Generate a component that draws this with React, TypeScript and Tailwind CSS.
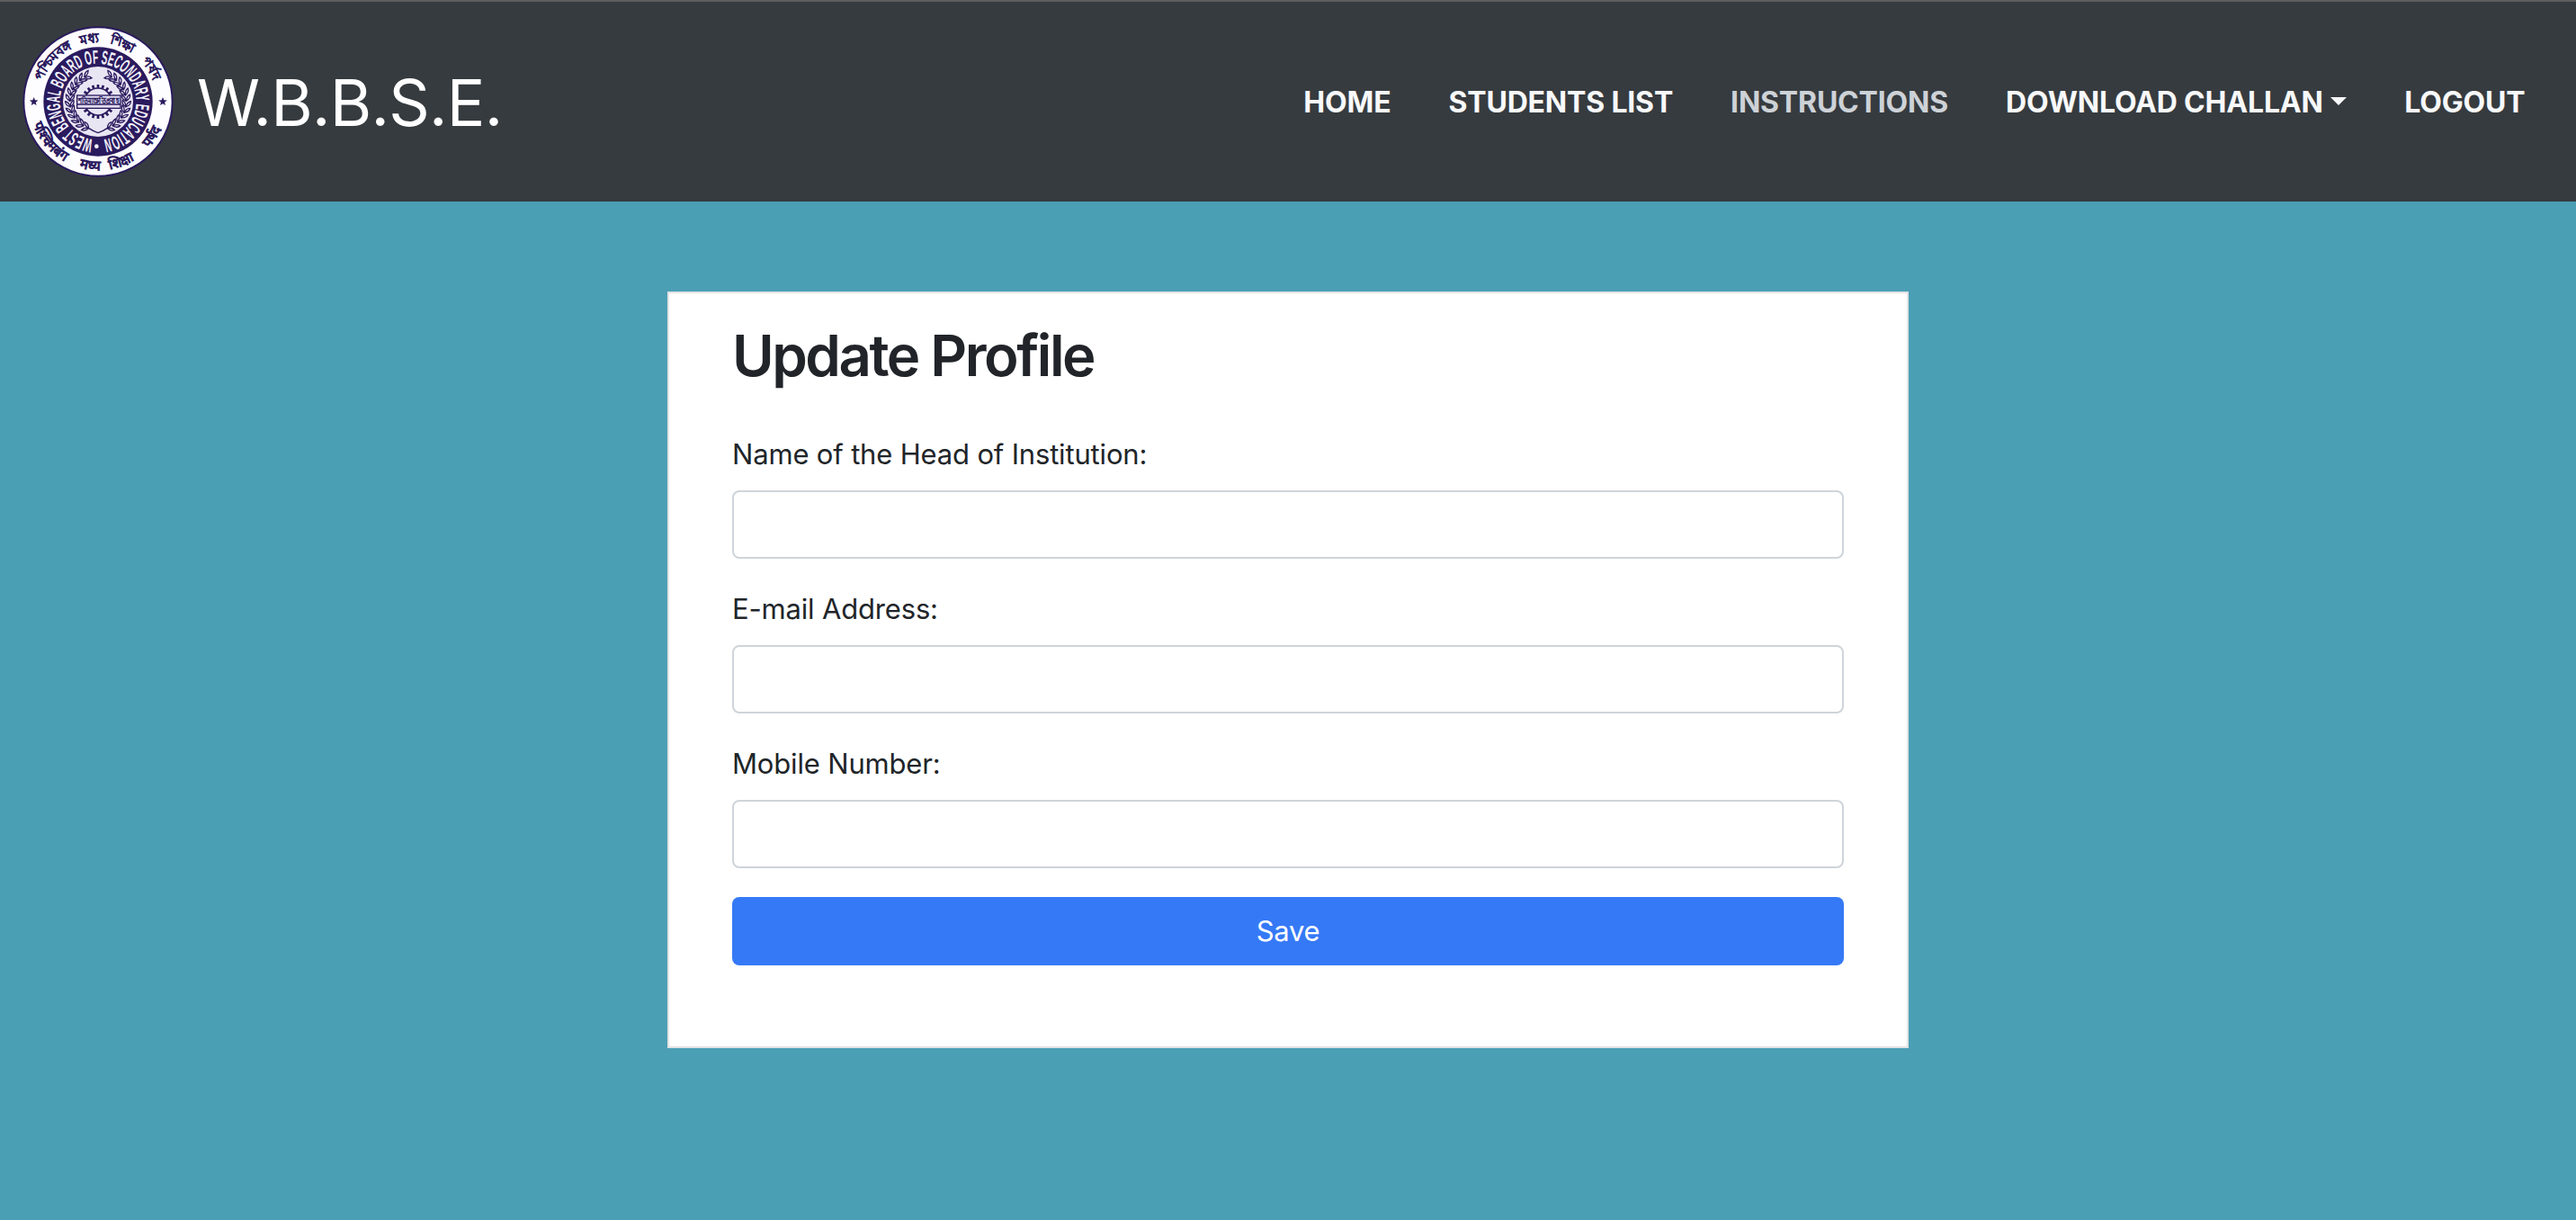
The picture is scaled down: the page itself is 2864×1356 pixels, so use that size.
import React from "react";

const NAVY = "#2a1a5e";

const topWords = [
  { text: "পশ্চিমবঙ্গ", angle: -48 },
  { text: "মধ্য", angle: -8 },
  { text: "শিক্ষা", angle: 23 },
  { text: "পর্ষদ", angle: 58 },
];

const bottomWords = [
  { text: "पश्चिमबंग", angle: 50 },
  { text: "मध्य", angle: 7 },
  { text: "शिक्षा", angle: -21 },
  { text: "पर्षद", angle: -57 },
];

const leafAngles = [22, 34, 46, 58, 70, 82, 94, 106, 118, 130, 142, 154];
const toothAngles = Array.from({ length: 20 }, (_, i) => i * 18);

function Star({ x }: { x: number }) {
  const points = Array.from({ length: 10 }, (_, i) => {
    const r = i % 2 === 0 ? 15 : 6.5;
    const a = (i * Math.PI) / 5 - Math.PI / 2;
    return `${(x + r * Math.cos(a)).toFixed(1)},${(r * Math.sin(a)).toFixed(1)}`;
  }).join(" ");
  return <polygon points={points} fill={NAVY} />;
}

function WreathHalf() {
  return (
    <g fill="#f4f2fb" stroke={NAVY} strokeWidth="4">
      <path d="M0 104 Q-14 100 -30 89" fill="none" />
      {leafAngles.map((a) => (
        <g key={a} transform={`rotate(${a}) translate(0 94)`}>
          <path d="M4 0 Q-2 -15 -16 -14 Q-12 -3 4 0Z" />
          <path d="M4 0 Q-2 15 -16 14 Q-12 3 4 0Z" />
        </g>
      ))}
    </g>
  );
}

function Seal() {
  return (
    <svg viewBox="-252 -252 504 504" className="h-[168px] w-[168px] shrink-0" role="img">
      <defs>
        <path id="arc-top" d="M0 197 A197 197 0 0 1 0 -197 A197 197 0 0 1 0 197" />
        <path id="arc-bottom" d="M0 -229 A229 229 0 0 0 0 229 A229 229 0 0 0 0 -229" />
        <path id="arc-ring" d="M0 127 A127 127 0 0 1 0 -127 A127 127 0 0 1 0 127" />
      </defs>
      <circle r="248" fill="#fdfcff" stroke={NAVY} strokeWidth="6" />
      <circle r="182" fill={NAVY} />
      <circle r="117" fill="#e9e6f4" />

      <g fill={NAVY} stroke={NAVY} strokeWidth="3" fontFamily="'Noto Sans', sans-serif" textAnchor="middle">
        {topWords.map((w) => (
          <text key={w.text} fontSize="43" transform={`rotate(${w.angle})`}>
            <textPath href="#arc-top" startOffset="50%">{w.text}</textPath>
          </text>
        ))}
        {bottomWords.map((w) => (
          <text key={w.text} fontSize="46" transform={`rotate(${w.angle})`}>
            <textPath href="#arc-bottom" startOffset="50%">{w.text}</textPath>
          </text>
        ))}
      </g>

      <text
        transform="rotate(7)"
        fontFamily="'Liberation Sans', sans-serif"
        fontWeight="700"
        fontSize="64"
        wordSpacing="-2"
        fill="#f4f2fb"
        textLength="764"
        lengthAdjust="spacingAndGlyphs"
      >
        <textPath href="#arc-ring" textLength="764" lengthAdjust="spacingAndGlyphs">
          WEST BENGAL BOARD OF SECONDARY EDUCATION
        </textPath>
      </text>
      <circle cx="-5" cy="149" r="7" fill="#f4f2fb" />
      <Star x={-214} />
      <Star x={216} />

      <WreathHalf />
      <g transform="scale(-1 1)">
        <WreathHalf />
      </g>

      <g fill={NAVY}>
        {toothAngles.map((a) => (
          <rect key={a} x="-4" y="-57" width="8" height="12" transform={`rotate(${a})`} />
        ))}
      </g>
      <circle r="45" fill="#e9e6f4" stroke={NAVY} strokeWidth="5" />
      <rect x="-70" y="-21" width="145" height="43" fill="#e0dcf0" stroke={NAVY} strokeWidth="4" />
      <path d="M-70 9 H75" stroke={NAVY} strokeWidth="4" />
      <text
        x="2"
        y="5"
        textAnchor="middle"
        fontFamily="'Noto Sans', sans-serif"
        fontSize="26"
        fill={NAVY}
        stroke={NAVY}
        strokeWidth="1.6"
        textLength="136"
        lengthAdjust="spacingAndGlyphs"
      >
        শতিমাস্রুতিপ্রবাহ
      </text>
    </svg>
  );
}

const links = [
  { label: "HOME" },
  { label: "STUDENTS LIST" },
  { label: "INSTRUCTIONS", muted: true },
  { label: "DOWNLOAD CHALLAN", caret: true },
  { label: "LOGOUT" },
];

const fields = [
  { id: "head", label: "Name of the Head of Institution:" },
  { id: "email", label: "E-mail Address:" },
  { id: "mobile", label: "Mobile Number:" },
];

export default function App() {
  return (
    <div className="min-h-[1356px] bg-[#4b9fb5] font-[Inter,sans-serif] text-[#212529]">
      <header className="flex h-[224px] items-center justify-between border-t-2 border-[#5e5e5e] bg-[#363b3f] pr-[56.5px] pl-[25px]">
        <a href="#" className="flex items-center gap-[26px] text-white">
          <Seal />
          <span className="pt-[2px] text-[71px] leading-none font-[420] tracking-[-0.7px]">W.B.B.S.E.</span>
        </a>
        <nav className="flex items-center gap-16 pt-[2px] text-[32px] leading-[48px] font-bold tracking-[-0.18px] text-[#f8f9fa]">
          {links.map((l) => (
            <a key={l.label} href="#" className={l.muted ? "text-[#cdd2d7]" : "flex items-center"}>
              {l.label}
              {l.caret && (
                <span className="mb-[3px] ml-[8.5px] border-x-[9.5px] border-t-[9.5px] border-x-transparent border-t-[#f8f9fa]" />
              )}
            </a>
          ))}
        </nav>
      </header>

      <main className="flex justify-center pt-[100px]">
        <form className="h-[841px] w-[1380px] border-2 border-[#e2e2e2] bg-white px-[70px] pt-[31px]">
          <h1 className="h-[76px] text-[63.5px] leading-[76px] font-[570] tracking-[-2.5px]">Update Profile</h1>
          <div className="mt-12 flex flex-col gap-8">
            {fields.map((f) => (
              <div key={f.id} className="flex flex-col gap-4">
                <label htmlFor={f.id} className="text-[31px] leading-[48px] tracking-[-0.17px]">
                  {f.label}
                </label>
                <input id={f.id} className="h-[76px] rounded-lg border-2 border-[#ced4da] bg-white px-6 text-[31px]" />
              </div>
            ))}
            <button type="button" className="h-[76px] rounded-lg bg-[#3579f6] text-[31px] tracking-[-0.3px] text-white">
              Save
            </button>
          </div>
        </form>
      </main>
    </div>
  );
}
